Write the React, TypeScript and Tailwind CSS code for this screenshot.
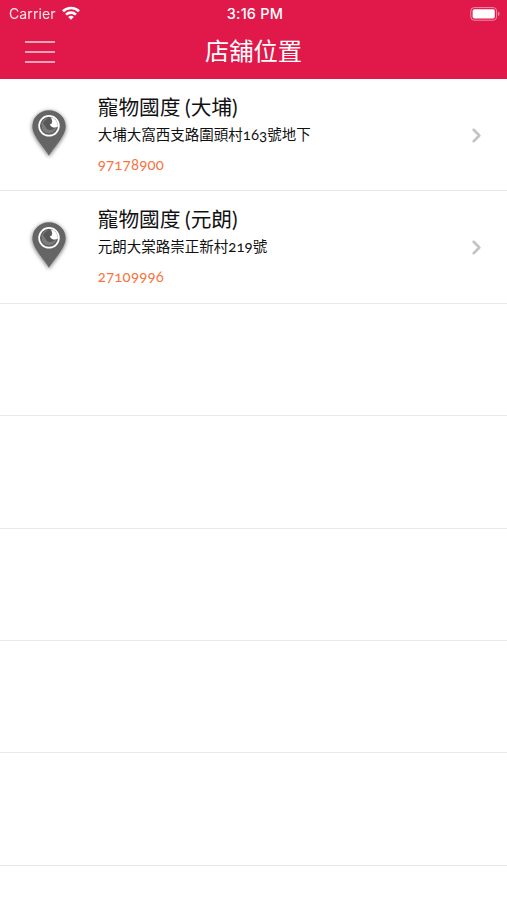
import { ChevronRight } from 'lucide-react';

interface Shop {
  name: string;
  area: string;
  address: [string, string, string];
  phone: string;
}

const shops: Shop[] = [
  { name: '寵物國度', area: '大埔', address: ['大埔大窩西支路圍頭村', '163', '號地下'], phone: '97178900' },
  { name: '寵物國度', area: '元朗', address: ['元朗大棠路崇正新村', '219', '號'], phone: '27109996' },
];

const emptyRows = [0, 1, 2, 3, 4, 5];

function WifiIcon() {
  return (
    <svg width="18" height="14" viewBox="0 0 18 14" fill="none" stroke="white" strokeWidth="2.6" className="-mt-0.5">
      <path d="M1 5.2C5.4 0.9 12.6 0.9 17 5.2" />
      <path d="M4 8.6C6.8 5.9 11.2 5.9 14 8.6" />
      <path d="M9 13.7L6.2 10.9C7.8 9.5 10.2 9.5 11.8 10.9Z" fill="white" stroke="none" />
    </svg>
  );
}

function BatteryIcon() {
  return (
    <svg width="31" height="14" viewBox="0 0 31 14">
      <rect x="0.8" y="0.6" width="25.8" height="12.6" rx="3.4" fill="none" stroke="white" strokeOpacity="0.5" strokeWidth="1" />
      <rect x="2.6" y="2.3" width="22.2" height="9.2" rx="1.8" fill="white" />
      <path d="M28 4.8C30 5.5 30 8.3 28 9Z" fill="white" fillOpacity="0.5" />
    </svg>
  );
}

function PinIcon() {
  return (
    <svg width="42" height="54" viewBox="0 0 42 54" className="overflow-visible">
      <defs>
        <filter id="pinShadow" x="-30%" y="-30%" width="160%" height="160%">
          <feDropShadow dx="0" dy="1" stdDeviation="1.9" floodColor="#000" floodOpacity="0.6" />
        </filter>
      </defs>
      <path
        d="M21 49C18.5 43 4.3 29.5 4.3 19.5A16.7 16.3 0 0 1 37.7 19.5C37.7 29.5 23.5 43 21 49Z"
        fill="#656565"
        filter="url(#pinShadow)"
      />
      <circle cx="21" cy="18.8" r="9.9" fill="#5e5e5e" stroke="white" strokeWidth="1.7" />
      <path d="M13.4 16.5A7.8 7.8 0 0 1 20 11.2C18 15 20 20 28.4 20.8A7.8 7.8 0 0 1 14 22Z" fill="#7c7c7c" />
      <path d="M15 16A6 6 0 0 1 22 12C20 16 22 21 27.5 20.5A7 7 0 0 1 19 22Z" fill="#585858" />
      <path d="M22.5 10.2A9 9 0 0 1 30 19.5C27.5 21.6 22.8 20.6 21.8 17.2C23.8 17.8 25.6 14.2 22.5 10.2Z" fill="white" />
    </svg>
  );
}

function ShopRow({ shop }: { shop: Shop }) {
  return (
    <li className="flex h-[112.4px] border-b border-[#e8e8e8] pl-7">
      <div className="w-[69.7px] pt-[28px]">
        <PinIcon />
      </div>
      <div className="flex-1 whitespace-nowrap pt-3 text-[#111]">
        <h2 className="text-[20.7px] leading-[30px]">
          {shop.name} <span className="font-['Lato']">(</span>{shop.area}<span className="font-['Lato']">)</span>
        </h2>
        <p className="text-[14.5px] leading-[24px]">
          {shop.address[0]}
          <span className="font-['Lato'] text-[15px] tracking-[0.1px] oldstyle-nums">{shop.address[1]}</span>
          {shop.address[2]}
        </p>
        <p className="pt-1 font-['Lato'] text-[15px] leading-[28px] tracking-[0.2px] text-[#f7743f] oldstyle-nums">{shop.phone}</p>
      </div>
      <ChevronRight className="mr-[19px] mt-[45px] text-[#c4c4c6]" size={23} strokeWidth={2.7} />
    </li>
  );
}

export default function App() {
  return (
    <div className="h-[900px] overflow-hidden bg-white font-['Noto_Sans_CJK_TC',sans-serif]">
      <header className="h-[79px] bg-[#e0194a] text-white">
        <div className="grid h-[27px] grid-cols-3 items-center pl-[9px] pr-[6px] font-['Inter'] text-[14px]">
          <div className="flex items-center gap-[6px]">
            <span className="tracking-[0.1px] opacity-90">Carrier</span>
            <WifiIcon />
          </div>
          <div className="text-center text-[14.5px] font-medium tracking-[0.2px]">3:16 PM</div>
          <div className="flex justify-end">
            <BatteryIcon />
          </div>
        </div>
        <div className="grid grid-cols-[1fr_auto_1fr] items-center">
          <button className="mb-px ml-[25px] mt-1 flex w-[30px] flex-col gap-2" aria-label="Menu">
            <span className="h-[2px] bg-white/60" />
            <span className="h-[2px] bg-white/60" />
            <span className="h-[2px] bg-white/60" />
          </button>
          <h1 className="text-[24.3px] leading-[46px]">店舖位置</h1>
        </div>
      </header>
      <ul>
        {shops.map((shop) => (
          <ShopRow key={shop.phone} shop={shop} />
        ))}
        {emptyRows.map((i) => (
          <li key={i} className="h-[112.4px] border-b border-[#e8e8e8]" />
        ))}
      </ul>
    </div>
  );
}
